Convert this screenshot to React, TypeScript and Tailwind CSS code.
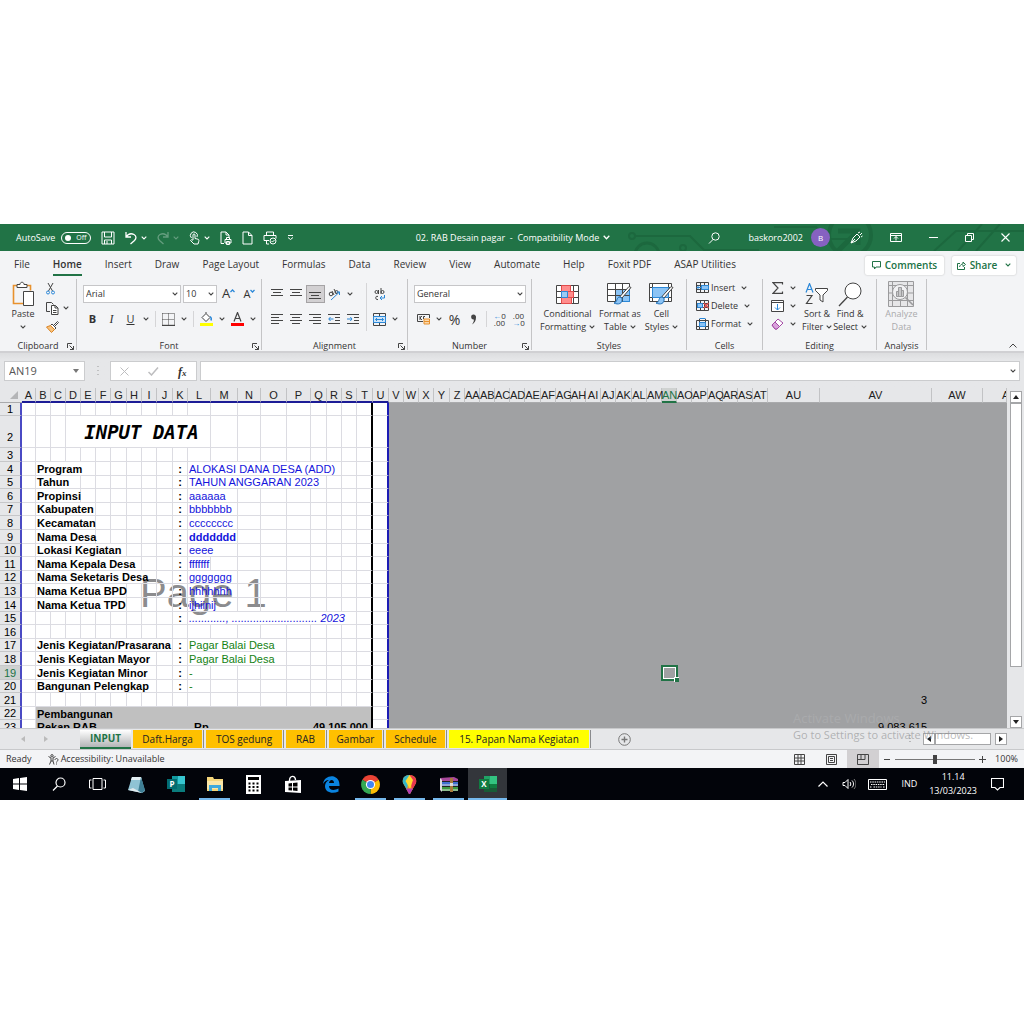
import type { ReactNode } from 'react';
import { clsx } from 'clsx';

const G = '#444444';
const B = '#2b88d8';

function Svg({ w, h, children, stroke = G }: { w: number; h: number; children: ReactNode; stroke?: string }) {
    return (
        <svg width={w} height={h} viewBox={`0 0 ${w} ${h}`} fill="none" stroke={stroke} strokeWidth="1" className="shrink-0">
            {children}
        </svg>
    );
}

function Chevron({ stroke = G }: { stroke?: string }) {
    return (
        <Svg w={6} h={4} stroke={stroke}>
            <path d="M.7.7 3 3 5.3.7" strokeWidth="1.1" />
        </Svg>
    );
}

function Lines({ widths, align = 'left' }: { widths: number[]; align?: 'left' | 'center' | 'right' }) {
    return (
        <Svg w={13} h={12}>
            {widths.map((w, i) => {
                const x = align === 'left' ? 0 : align === 'right' ? 12 - w : (12 - w) / 2;
                return <path key={i} d={`M${x} ${i * 3 + 1.5}h${w}`} />;
            })}
        </Svg>
    );
}

/* ---------- Title bar ---------- */

function TitleButton({ label, children, menu, faint }: { label: string; children: ReactNode; menu?: boolean; faint?: boolean }) {
    return (
        <button aria-label={label} className={clsx('flex items-center gap-1', faint && 'opacity-30')}>
            {children}
            {menu && <Chevron stroke="#fff" />}
        </button>
    );
}

function TitleBar() {
    return (
        <header className="relative flex h-[27px] items-center overflow-hidden bg-[#217346] text-[9px] text-white">
            <div className="absolute inset-y-0 right-0">
                <Svg w={400} h={27} stroke="#1c683e">
                    <circle cx="8" cy="12" r="3" strokeWidth="2" />
                    <path d="M12 12h54l14 14h55M150 3h42l12 12h26" strokeWidth="2" />
                    <circle cx="23" cy="31" r="12" strokeWidth="3" />
                    <circle cx="59" cy="24" r="3" strokeWidth="2" />
                    <circle cx="226" cy="11" r="21" strokeWidth="4" />
                    <path d="M214 7h20v14M234 7l-20 20" strokeWidth="5" />
                    <path d="M310 27l22-20h68M334 27l24-27M352 27l24-27" strokeWidth="2" />
                </Svg>
            </div>
            <div className="relative flex flex-1 items-center gap-[10px] pl-4">
                <label className="flex items-center gap-[6px]">
                    <span>AutoSave</span>
                    <span className="relative flex h-3 w-[30px] items-center rounded-full border border-white">
                        <input type="checkbox" className="absolute inset-0 appearance-none" />
                        <span className="ml-[3px] size-[6px] rounded-full bg-white" />
                        <span className="ml-[5px] text-[7px] leading-none">Off</span>
                    </span>
                </label>
                <TitleButton label="Save">
                    <Svg w={14} h={14} stroke="#fff">
                        <path d="M1 1h12v12H1zM3.5 1v5h7V1M3.5 13V9h7v4M6 10v3" />
                    </Svg>
                </TitleButton>
                <TitleButton label="Undo" menu>
                    <Svg w={12} h={14} stroke="#fff">
                        <path d="M1 1v5h5M1 6c2-3 5-4 8-2.5 2.500 1.500 2.500 4 .5 6L5.500 13" strokeWidth="1.3" />
                    </Svg>
                </TitleButton>
                <TitleButton label="Redo" menu faint>
                    <Svg w={12} h={14} stroke="#fff">
                        <path d="M11 1v5H6M11 6C9 3 6 2 3 3.5.5 5 .5 7.5 2.500 9.500L6.500 13" strokeWidth="1.3" />
                    </Svg>
                </TitleButton>
                <TitleButton label="Touch mode" menu>
                    <Svg w={11} h={14} stroke="#fff">
                        <path d="M2.500 7A3.500 3.500 0 1 1 8 6M4 9V4c0-1.500 2-1.500 2 0v3.500l3 .7c1 .3 1 1 .8 2L9 13H5L1.500 9.500c.5-1 1.500-1 2.500 0" />
                    </Svg>
                </TitleButton>
                <TitleButton label="Print preview">
                    <Svg w={12} h={14} stroke="#fff">
                        <path d="M4 12.500H1V1h5l3 3v3M6 1v3h3M5 8.500h6v3.500H5zM6.500 8.500v-2h3v2M6.500 10.500h3v3h-3z" />
                    </Svg>
                </TitleButton>
                <TitleButton label="New">
                    <Svg w={11} h={14} stroke="#fff">
                        <path d="M1 1h5.500l3.500 3.500V13H1zM6.500 1v3.500H10" />
                    </Svg>
                </TitleButton>
                <TitleButton label="Quick print">
                    <Svg w={14} h={14} stroke="#fff">
                        <path d="M6 9.500H1v-5h12v3M3.500 4.500V1h7v3.500M3.500 9v4H6" />
                        <circle cx="10" cy="10" r="3" />
                        <path d="m8.500 10 1 1 2-2" />
                    </Svg>
                </TitleButton>
                <TitleButton label="Customize toolbar">
                    <Svg w={7} h={7} stroke="#fff">
                        <path d="M1 1.500h5M1 3.500l2.500 2 2.500-2" />
                    </Svg>
                </TitleButton>
            </div>
            <button className="relative flex items-center gap-1 whitespace-pre">
                02. RAB Desain pagar  -  Compatibility Mode
                <Svg w={7} h={5} stroke="#fff">
                    <path d="m.7.7 2.800 3 2.800-3" strokeWidth="1.3" />
                </Svg>
            </button>
            <div className="relative flex flex-1 items-center justify-end pr-[14px]">
                <button aria-label="Search" className="mr-7">
                    <Svg w={12} h={12} stroke="#fff">
                        <circle cx="7.500" cy="4.500" r="3.700" />
                        <path d="M5 7.500 1 11.500" />
                    </Svg>
                </button>
                <button className="mr-5 flex items-center gap-2">
                    baskoro2002
                    <span className="flex size-[19px] items-center justify-center rounded-full bg-[#8661c1] text-[8px]">B</span>
                </button>
                <div className="flex items-center gap-[27px]">
                    <button aria-label="Drawing">
                        <Svg w={13} h={13} stroke="#fff">
                            <path d="m1 12 2-5 4-4 3 3-4 4-5 2 4-4M8 2l2-1M10 4l2-2M11 6l1.500-1" />
                        </Svg>
                    </button>
                    <button aria-label="Ribbon display options">
                        <Svg w={12} h={9} stroke="#fff">
                            <path d="M.5.5h11v8H.5zM.5 2.500h11M6 7.500v-4M4 5.500l2-2 2 2" />
                        </Svg>
                    </button>
                    <button aria-label="Minimize">
                        <Svg w={9} h={9} stroke="#fff">
                            <path d="M0 4.500h9" />
                        </Svg>
                    </button>
                    <button aria-label="Restore">
                        <Svg w={9} h={9} stroke="#fff">
                            <path d="M.5 2.500h6v6h-6zM2.500 2.500V.5h6v6h-2" />
                        </Svg>
                    </button>
                    <button aria-label="Close">
                        <Svg w={9} h={9} stroke="#fff">
                            <path d="m.5.5 8 8m0-8-8 8" strokeWidth="1.1" />
                        </Svg>
                    </button>
                </div>
            </div>
        </header>
    );
}

/* ---------- Ribbon ---------- */

const TABS = ['File', 'Home', 'Insert', 'Draw', 'Page Layout', 'Formulas', 'Data', 'Review', 'View', 'Automate', 'Help', 'Foxit PDF', 'ASAP Utilities'];

function RibbonTabs() {
    return (
        <nav className="flex h-7 items-center justify-between pr-2 pl-[14px]">
            <div className="flex gap-[23px] text-[10px] whitespace-nowrap">
                {TABS.map((tab) => (
                    <button
                        key={tab}
                        className={clsx('h-[21px] border-b-2', tab === 'Home' ? 'border-[#217346] font-semibold text-[#333]' : 'border-transparent')}
                    >
                        {tab}
                    </button>
                ))}
            </div>
            <div className="flex gap-2 text-[10px] font-semibold text-[#217346]">
                <button className="flex h-[19px] w-[79px] items-center justify-center gap-1 rounded-xs bg-white shadow-[0_0_2px_#bbb]">
                    <Svg w={9} h={9} stroke="#217346">
                        <path d="M.5.5h8v5.500H4L2.500 8V6h-2z" />
                    </Svg>
                    Comments
                </button>
                <button className="flex h-[19px] w-[64px] items-center justify-center gap-1 rounded-xs bg-white shadow-[0_0_2px_#bbb]">
                    <Svg w={9} h={9} stroke="#217346">
                        <path d="M3 2.500H.5v6h7V6M2.500 6C3 4 4.500 3 6 3V1l2.500 2.500L6 5.500V4" />
                    </Svg>
                    Share
                    <span className="pl-1"><Chevron stroke="#217346" /></span>
                </button>
            </div>
        </nav>
    );
}

function Group({ name, width, launcher, children }: { name: string; width: string; launcher?: boolean; children: ReactNode }) {
    return (
        <section className={clsx('relative flex h-[71px] shrink-0 flex-col justify-between border-r border-[#c4c4c6]', width)}>
            <div className="flex h-[58px]">{children}</div>
            <h2 className="flex h-2 items-center justify-center text-[9px]">{name}</h2>
            {launcher && (
                <button aria-label={`${name} settings`} className="absolute right-[2px] bottom-0">
                    <Svg w={7} h={7}>
                        <path d="M.5 5V.5H5M2.500 2.500l4 4M6.500 3v3.500H3" />
                    </Svg>
                </button>
            )}
        </section>
    );
}

function Tool({ label, children, menu, active }: { label: string; children: ReactNode; menu?: boolean; active?: boolean }) {
    return (
        <button aria-label={label} className="flex h-[18px] items-center">
            <span className={clsx('flex h-[18px] w-[19px] items-center justify-center', active && 'border border-[#a5a3a5] bg-[#d2d0d2]')}>{children}</span>
            {menu && <span className="flex w-3 justify-center"><Chevron /></span>}
        </button>
    );
}

function Rule() {
    return <span className="mx-[3px] h-4 w-px bg-[#d5d5d7]" />;
}

function Combo({ label, value, width }: { label: string; value: string; width: string }) {
    return (
        <label className={clsx('relative flex h-[18px] items-center border border-[#c6c6c8] bg-white', width)}>
            <select aria-label={label} className="h-full w-full appearance-none pl-[2px] text-[9px] text-[#333]">
                <option>{value}</option>
            </select>
            <span className="pointer-events-none absolute right-[2px]"><Chevron /></span>
        </label>
    );
}

function BigTool({ icon, lines, menu, faint }: { icon: ReactNode; lines: [string, string]; menu?: boolean; faint?: boolean }) {
    return (
        <button className={clsx('flex flex-col items-center pt-[2px] text-[9px] leading-[13px] whitespace-nowrap', faint && 'text-[#aaaaac]')}>
            <span className="flex h-[26px] items-center">{icon}</span>
            <span>{lines[0]}</span>
            <span className="flex items-center gap-[3px]">{lines[1]}{menu && <Chevron />}</span>
        </button>
    );
}

function SmallTool({ label, icon }: { label: string; icon: ReactNode }) {
    return (
        <button className="flex h-[18px] items-center gap-[2px] text-[9px]">
            {icon}
            {label}
            <span className="pl-1"><Chevron /></span>
        </button>
    );
}

function Ribbon() {
    return (
        <div className="flex h-[74px] overflow-hidden border-b-2 border-[#d0d0d3]">
            <Group name="Clipboard" width="w-[77px]" launcher>
                <button className="flex w-[46px] flex-col items-center pt-[2px] text-[9px] leading-[13px]">
                    <span className="flex h-[26px] items-center">
                        <Svg w={24} h={26}>
                            <path d="M6 4.500H2.500v18H12M16 4.500h3.500v5" stroke="#e8912d" strokeWidth="1.6" />
                            <path d="M6 6.500v-3h3c0-3 4-3 4 0h3v3z" fill="#fff" />
                            <path d="M12.500 10.500h10v14h-10z" fill="#fff" />
                        </Svg>
                    </span>
                    Paste
                    <span className="flex h-[13px] items-center"><Chevron /></span>
                </button>
                <div className="flex flex-col pt-[1px] pl-[-4px]">
                    <button aria-label="Cut" className="flex h-[18px] items-center">
                        <Svg w={9} h={12}>
                            <path d="m2 0 4.500 8M7 0 2.500 8" />
                            <circle cx="2" cy="9.500" r="1.500" stroke={B} />
                            <circle cx="7" cy="9.500" r="1.500" stroke={B} />
                        </Svg>
                    </button>
                    <button aria-label="Copy" className="flex h-5 items-center gap-1">
                        <Svg w={13} h={13}>
                            <path d="M4 9.500H.5v-9h5l2 2" />
                            <path d="M5.500 3.500h4l2.500 2.500v6.500H5.500zM9 3.500V6h3M7 8.500h3.500M7 10.500h3.500" fill="#fff" />
                        </Svg>
                        <Chevron />
                    </button>
                    <button aria-label="Format painter" className="flex h-[18px] items-center">
                        <Svg w={13} h={12}>
                            <path d="M8 4 11.500.5l1 1L9 5M6 3l4 4-1.500 1.500-4-4z" fill="#fff" />
                            <path d="M4.500 4.500.5 6l5 5.500 3-3z" fill="#f7c27d" stroke="#d98324" />
                        </Svg>
                    </button>
                </div>
            </Group>

            <Group name="Font" width="w-[185px]" launcher>
                <div className="flex flex-col gap-[7px] pt-[6px] pl-[6px]">
                    <div className="flex items-center gap-[2px]">
                        <Combo label="Font" value="Arial" width="w-[98px]" />
                        <Combo label="Font size" value="10" width="w-[34px]" />
                        <Tool label="Increase font size">
                            <span className="text-[13px]">A</span>
                            <Svg w={5} h={12} stroke={B}><path d="m.5 4 2-2 2 2" strokeWidth="1.3" /></Svg>
                        </Tool>
                        <Tool label="Decrease font size">
                            <span className="text-[11px]">A</span>
                            <Svg w={5} h={12} stroke={B}><path d="m.5 2 2 2 2-2" strokeWidth="1.3" /></Svg>
                        </Tool>
                    </div>
                    <div className="flex items-center">
                        <Tool label="Bold"><b className="text-[11px]">B</b></Tool>
                        <Tool label="Italic"><i className="font-['Liberation_Serif',serif] text-[12px]">I</i></Tool>
                        <Tool label="Underline" menu><u className="text-[11px]">U</u></Tool>
                        <Rule />
                        <Tool label="Borders" menu>
                            <Svg w={13} h={13}>
                                <path d="M.5.5h12v12M.5.5v12M6.500.5v12M.5 6.500h12" strokeDasharray="1 1" />
                                <path d="M0 12.500h13" strokeWidth="1.4" />
                            </Svg>
                        </Tool>
                        <Rule />
                        <Tool label="Fill color" menu>
                            <Svg w={13} h={14}>
                                <path d="m2 5.500 4-4 4 4-4 4zM6 1.500V0" fill="#fff" />
                                <path d="M10 4.500c1.500 1 1.500 2.500 1 4" stroke={B} strokeWidth="1.5" />
                                <path d="M0 12.500h13" stroke="#ff0" strokeWidth="3" />
                            </Svg>
                        </Tool>
                        <Tool label="Font color" menu>
                            <Svg w={13} h={14}>
                                <path d="M3 9.500 6.500.5 10 9.500M4.300 6.500h4.400" strokeWidth="1.2" />
                                <path d="M0 12.500h13" stroke="#f00" strokeWidth="3" />
                            </Svg>
                        </Tool>
                    </div>
                </div>
            </Group>

            <Group name="Alignment" width="w-[146px]" launcher>
                <div className="flex flex-col gap-[7px] pt-[6px] pl-[6px]">
                    <div className="flex w-[98px]">
                        <Tool label="Top align"><Lines widths={[12, 8, 12]} align="center" /></Tool>
                        <Tool label="Middle align"><Lines widths={[12, 8, 12]} align="center" /></Tool>
                        <Tool label="Bottom align" active><Lines widths={[0, 12, 8, 12]} align="center" /></Tool>
                        <Tool label="Orientation" menu>
                            <Svg w={13} h={13}>
                                <circle cx="3" cy="6" r="1.800" />
                                <path d="m4 3 2 4M6 1l2.500 5" />
                                <circle cx="8.500" cy="4" r="1.500" />
                                <path d="m3 12 8.500-8M8.500 4h3v3" stroke={B} />
                            </Svg>
                        </Tool>
                    </div>
                    <div className="flex w-[98px]">
                        <Tool label="Align left"><Lines widths={[12, 8, 12, 8]} /></Tool>
                        <Tool label="Center"><Lines widths={[12, 8, 12, 8]} align="center" /></Tool>
                        <Tool label="Align right"><Lines widths={[12, 8, 12, 8]} align="right" /></Tool>
                        <Tool label="Decrease indent">
                            <Svg w={13} h={12}>
                                <path d="M0 1.500h12M7 4.500h5M7 7.500h5M0 10.500h12" />
                                <path d="M5.500 6H.8M2.500 4 .8 6l1.700 2" stroke={B} />
                            </Svg>
                        </Tool>
                        <Tool label="Increase indent">
                            <Svg w={13} h={12}>
                                <path d="M0 1.500h12M7 4.500h5M7 7.500h5M0 10.500h12" />
                                <path d="M0 6h5M3.300 4 5 6 3.300 8" stroke={B} />
                            </Svg>
                        </Tool>
                    </div>
                </div>
                <span className="mt-[4px] h-12 w-px bg-[#d5d5d7]" />
                <div className="flex flex-col gap-[7px] pt-[6px] pl-[3px]">
                    <Tool label="Wrap text">
                        <Svg w={12} h={13}>
                            <circle cx="2.500" cy="4" r="1.500" />
                            <path d="M4.500 2v4M7 0v6M4 8.500c-3-1.500-3 4 0 3" />
                            <circle cx="8.500" cy="4" r="1.500" />
                            <path d="M10.500 7v3H6M8 8l-2 2 2 2" stroke={B} />
                        </Svg>
                    </Tool>
                    <Tool label="Merge and center" menu>
                        <Svg w={13} h={13}>
                            <path d="M.5.5h12v12H.5zM6.500.5v3M6.500 9.500v3" />
                            <path d="M.5 3.500h12v6H.5z" fill="#cfe5f8" stroke={B} />
                            <path d="M2.500 6.500h8M4 5 2.500 6.500 4 8M9 5l1.500 1.500L9 8" stroke={B} />
                        </Svg>
                    </Tool>
                </div>
            </Group>

            <Group name="Number" width="w-[124px]" launcher>
                <div className="flex flex-col gap-[7px] pt-[6px] pl-[6px]">
                    <Combo label="Number format" value="General" width="w-[112px]" />
                    <div className="flex items-center">
                        <Tool label="Accounting format" menu>
                            <Svg w={13} h={12}>
                                <path d="M12.500 5V1.500H.5v7H6M3 3v4M3 5l2-2M3 5l2 2M8 3.500H6.500V6" />
                                <path d="M7 6h5.500v5H7zM7 8.500h5.500" fill="#fbd9ae" stroke="#e8912d" />
                            </Svg>
                        </Tool>
                        <Tool label="Percent style"><span className="text-[14px]">%</span></Tool>
                        <Tool label="Comma style">
                            <Svg w={7} h={11}>
                                <path d="M3.500.5a2.500 2.500 0 0 1 2.500 3C6 7 4.500 9 2 10.500 3.500 8.500 4 7 3.800 5.500A2.500 2.500 0 1 1 3.500.5z" fill={G} stroke="none" />
                            </Svg>
                        </Tool>
                        <Rule />
                        <Tool label="Increase decimal">
                            <span className="text-[8px] leading-[7px]"><span className="text-[#2b88d8]">←</span>0<br />.00</span>
                        </Tool>
                        <Tool label="Decrease decimal">
                            <span className="text-[8px] leading-[7px]">.00<br /><span className="text-[#2b88d8]">→</span>0</span>
                        </Tool>
                    </div>
                </div>
            </Group>

            <Group name="Styles" width="w-[155px]">
                <div className="flex w-full justify-between px-2">
                    <BigTool
                        lines={['Conditional', 'Formatting']}
                        menu
                        icon={
                            <Svg w={23} h={19}>
                                <path d="M.5.5h22v18H.5zM.5 6.500h22M.5 12.500h22M5.500.5v18M17.500.5v18" fill="#fff" />
                                <path d="M5.500.5h9v6h-9zM11.500 6.500h6v6h-6zM5.500 12.500h10v6h-10z" fill="#ff8d8d" stroke="#e24b4b" />
                                <path d="M5.500 6.500h6v6h-6z" fill="#9ccbf4" stroke={B} />
                            </Svg>
                        }
                    />
                    <BigTool
                        lines={['Format as', 'Table']}
                        menu
                        icon={
                            <Svg w={25} h={22}>
                                <path d="M.5.5h22v18H.5z" fill="#fff" />
                                <path d="M8.500 6.500h14v12h-14z" fill="#8cc4f5" stroke={B} />
                                <path d="M.5 6.500h22M.5 12.500h22M8.500.5v18M15.500.5v18" />
                                <path d="M24 4.500 15 15l-2-1.500 9-10z" fill="#fff" />
                                <path d="M13 14c-4 0-2 5-6 6 4 2 9 1 8-5z" fill="#8cc4f5" stroke="#1d6fb8" />
                            </Svg>
                        }
                    />
                    <BigTool
                        lines={['Cell', 'Styles']}
                        menu
                        icon={
                            <Svg w={25} h={22}>
                                <path d="M.5.5h22v18H.5zM.5 4.500h22M.5 14.500h22M3.500.5v18M19.500.5v18" fill="#fff" />
                                <path d="M3.500 4.500h16v10h-16z" fill="#8cc4f5" stroke={B} />
                                <path d="M24 4.500 15 15l-2-1.500 9-10z" fill="#fff" />
                                <path d="M13 14c-4 0-2 5-6 6 4 2 9 1 8-5z" fill="#8cc4f5" stroke="#1d6fb8" />
                            </Svg>
                        }
                    />
                </div>
            </Group>

            <Group name="Cells" width="w-[76px]">
                <div className="flex flex-col pl-[9px]">
                    <SmallTool
                        label="Insert"
                        icon={
                            <Svg w={13} h={12}>
                                <path d="M.5.5h12v10H.5zM.5 3.500h12M.5 7.500h12M4.500.5v10M8.500.5v10" />
                                <path d="M5.500 3.500h7v4h-7z" fill="#8cc4f5" stroke={B} />
                                <path d="M6 5.500H1M3 3.500l-2 2 2 2" stroke={B} />
                            </Svg>
                        }
                    />
                    <SmallTool
                        label="Delete"
                        icon={
                            <Svg w={13} h={12}>
                                <path d="M.5.5h12v10H.5zM.5 3.500h12M.5 7.500h12M4.500.5v10M8.500.5v10" />
                                <path d="M1.500 3.500h5v4h-5z" fill="#8cc4f5" stroke={B} />
                                <path d="m8 3 4.500 5M12.500 3 8 8" stroke="#e24b4b" strokeWidth="1.3" />
                            </Svg>
                        }
                    />
                    <SmallTool
                        label="Format"
                        icon={
                            <Svg w={13} h={12}>
                                <path d="M.5 2.500h12v9H.5zM3.500 1v10.500M9.500 1v10.500M.5 8.500h12" />
                                <path d="M3.500 4.500h6v4h-6z" fill="#8cc4f5" stroke={B} />
                                <path d="M3.500.5h6" stroke={B} />
                            </Svg>
                        }
                    />
                </div>
            </Group>

            <Group name="Editing" width="w-[114px]">
                <div className="flex flex-col pl-[5px]">
                    <Tool label="AutoSum" menu>
                        <Svg w={12} h={12}><path d="M10.500 2.500V.7H1L6 6l-5 5.300h9.500V9.500" strokeWidth="1.2" /></Svg>
                    </Tool>
                    <Tool label="Fill" menu>
                        <Svg w={13} h={12}>
                            <path d="M.5.5h12v11H.5zM.5 2.500h12" fill="#fff" />
                            <path d="M6.500 4v6M4 7.500l2.500 2.500L9 7.500" stroke={B} />
                        </Svg>
                    </Tool>
                    <Tool label="Clear" menu>
                        <Svg w={13} h={12}>
                            <path d="m1 7 6-6 5 4-6 6H4z" fill="#fff" stroke="#a349a4" />
                            <path d="m1 7 3-3 4.500 4.500L6 11H4z" fill="#d9a3dc" stroke="#a349a4" />
                        </Svg>
                    </Tool>
                </div>
                <div className="flex flex-1 justify-between pr-[9px] pl-[3px]">
                    <BigTool
                        lines={['Sort &', 'Filter']}
                        menu
                        icon={
                            <Svg w={24} h={22}>
                                <path d="M1 9.500 4.500.5 8 9.500M2.300 6.500h4.400" stroke={B} strokeWidth="1.2" />
                                <path d="M1.500 12.500H7l-5.500 8h6" strokeWidth="1.2" />
                                <path d="M10.500 5.500h12v2L18 12v7l-3-2v-5l-4.500-4.500z" fill="#fff" />
                            </Svg>
                        }
                    />
                    <BigTool
                        lines={['Find &', 'Select']}
                        menu
                        icon={
                            <Svg w={25} h={25}>
                                <circle cx="15" cy="9" r="8" fill="#fff" />
                                <path d="m9.500 15-8.500 9" strokeWidth="1.3" />
                            </Svg>
                        }
                    />
                </div>
            </Group>

            <Group name="Analysis" width="w-[50px]">
                <div className="flex w-full justify-center">
                    <BigTool
                        lines={['Analyze', 'Data']}
                        faint
                        icon={
                            <Svg w={26} h={26} stroke="#9b9b9d">
                                <path d="M.5.5h25v25H.5zM.5 4.500h25M.5 19.500h25M4.500.5v25M12.500 19v6M19.500.5v25M.5 12h25" fill="#e6e6e8" />
                                <circle cx="12" cy="11" r="7.500" fill="#f1f1f3" />
                                <path d="m17.500 16.500 7.500 7.500" strokeWidth="1.6" />
                                <path d="M8.500 10.500h2v5h-2zM10.500 6.500h3v9h-3zM13.500 9.500h2v6h-2z" fill="#c8c8ca" />
                            </Svg>
                        }
                    />
                </div>
            </Group>
            <div className="flex flex-1 items-end justify-end pr-[7px] pb-[3px]">
                <button aria-label="Collapse ribbon">
                    <Svg w={8} h={5}><path d="m.5 4.500 3.500-3.500 3.500 3.500" /></Svg>
                </button>
            </div>
        </div>
    );
}

function FormulaBar() {
    return (
        <div className="flex h-[35px] items-start bg-linear-to-b from-[#dcdddf] via-[#e6e7e9] via-20% to-[#e6e7e9] pt-2 pr-1 pl-1">
            <div className="relative flex h-5 w-[81px] items-center border border-[#cbccce] bg-white">
                <input aria-label="Name box" defaultValue="AN19" className="w-full pl-1 text-[11px] text-[#555]" />
                <span className="absolute right-[5px]">
                    <Svg w={6} h={4}><path d="M0 0h6L3 4z" fill="#777" stroke="none" /></Svg>
                </span>
            </div>
            <div className="flex h-5 w-[25px] items-center justify-center">
                <Svg w={2} h={10}><path d="M1 0v10" stroke="#999" strokeDasharray="1 3" /></Svg>
            </div>
            <div className="flex h-5 w-[87px] items-center justify-around border border-[#cbccce] bg-white">
                <button aria-label="Cancel">
                    <Svg w={9} h={9} stroke="#bdbdbf"><path d="m.5.5 8 8m0-8-8 8" /></Svg>
                </button>
                <button aria-label="Enter">
                    <Svg w={11} h={9} stroke="#bdbdbf"><path d="m.5 5 3 3L10 .5" strokeWidth="1.5" /></Svg>
                </button>
                <button className="font-['Liberation_Serif',serif] leading-none font-bold italic">
                    <span className="text-[12px]">f</span>
                    <span className="text-[9px]">x</span>
                </button>
            </div>
            <div className="relative ml-[3px] flex h-5 flex-1 items-center border border-[#cbccce] bg-white">
                <input aria-label="Formula" className="w-full" />
                <span className="absolute right-[3px]"><Chevron /></span>
            </div>
        </div>
    );
}

/* ---------- Worksheet ---------- */

const NARROW = [15, 15, 15, 16, 15, 15, 15, 15, 15, 16, 15, 15, 15, 15, 15, 16, 15, 15, 15, 15, 16, 15, 15, 15, 15];
const WIDTHS = [14, 15, 15, 15, 15, 15, 16, 15, 15, 16, 15, 23, 27, 23, 26, 24, 16, 15, 15, 16, 16, ...NARROW, 52, 112, 51];
const LETTERS = 'ABCDEFGHIJKLMNOPQRSTUVWXYZ'.split('');
const COLUMNS = [...LETTERS, ...LETTERS.slice(0, 24).map((l) => 'A' + l)];

interface Entry {
    n: number;
    h: number;
    label?: string;
    span?: number;
    value?: string;
    valueSpan?: number;
    tone?: string;
}

const BLUE = 'text-[#1414dc]';
const GREEN = 'text-[#148214]';

const ENTRIES: Entry[] = [
    { n: 1, h: 13 },
    { n: 2, h: 32 },
    { n: 3, h: 14 },
    { n: 4, h: 14, label: 'Program', span: 4, value: 'ALOKASI DANA DESA (ADD)', valueSpan: 7, tone: BLUE },
    { n: 5, h: 13, label: 'Tahun', span: 3, value: 'TAHUN ANGGARAN 2023', valueSpan: 6, tone: BLUE },
    { n: 6, h: 14, label: 'Propinsi', span: 3, value: 'aaaaaa', valueSpan: 2, tone: BLUE },
    { n: 7, h: 13, label: 'Kabupaten', span: 4, value: 'bbbbbbb', valueSpan: 2, tone: BLUE },
    { n: 8, h: 14, label: 'Kecamatan', span: 4, value: 'cccccccc', valueSpan: 2, tone: BLUE },
    { n: 9, h: 14, label: 'Nama Desa', span: 4, value: 'ddddddd', valueSpan: 2, tone: 'font-bold text-[#1414dc]' },
    { n: 10, h: 13, label: 'Lokasi Kegiatan', span: 6, value: 'eeee', valueSpan: 2, tone: BLUE },
    { n: 11, h: 14, label: 'Nama Kepala Desa', span: 7, value: 'fffffff', valueSpan: 1, tone: BLUE },
    { n: 12, h: 13, label: 'Nama Seketaris Desa', span: 8, value: 'ggggggg', valueSpan: 2, tone: BLUE },
    { n: 13, h: 14, label: 'Nama Ketua BPD', span: 6, value: 'hhhhhhh', valueSpan: 2, tone: BLUE },
    { n: 14, h: 14, label: 'Nama Ketua TPD', span: 6, value: 'ijhiinij', valueSpan: 2, tone: BLUE },
    { n: 15, h: 13, value: '............, ............................ 2023', valueSpan: 8, tone: 'italic text-[#1414dc]' },
    { n: 16, h: 14 },
    { n: 17, h: 13, label: 'Jenis Kegiatan/Prasarana', span: 9, value: 'Pagar Balai Desa', valueSpan: 4, tone: GREEN },
    { n: 18, h: 14, label: 'Jenis Kegiatan Mayor', span: 8, value: 'Pagar Balai Desa', valueSpan: 4, tone: GREEN },
    { n: 19, h: 14, label: 'Jenis Kegiatan Minor', span: 8, value: '-', valueSpan: 1, tone: GREEN },
    { n: 20, h: 13, label: 'Bangunan Pelengkap', span: 8, value: '-', valueSpan: 1, tone: GREEN },
    { n: 21, h: 14 },
    { n: 22, h: 13 },
    { n: 23, h: 14 },
];

function Blank({ from, to }: { from: number; to: number }) {
    return (
        <>
            {Array.from({ length: Math.max(0, to - from) }, (_, i) => (
                <td
                    key={i}
                    className={clsx(
                        'border-b border-b-[#dcdce2]',
                        from + i === 19 ? 'border-r-2 border-r-black' : from + i === 20 ? 'border-r-2 border-r-[#1c1cb4]' : 'border-r border-r-[#dcdce2]'
                    )}
                />
            ))}
        </>
    );
}

const CELL = 'border-r border-b border-[#dcdce2] px-[1px]';
const OUTSIDE = 'bg-[#a0a1a3]';

function PageCells({ row }: { row: Entry }) {
    if (row.n === 2) {
        return (
            <>
                <Blank from={0} to={3} />
                <td colSpan={9} className={clsx(CELL, "pl-2 text-center font-['DejaVu_Sans_Mono',monospace] text-[19px] leading-[20px] font-bold italic")}>INPUT DATA</td>
                <Blank from={12} to={21} />
            </>
        );
    }
    if (row.n === 22) {
        return (
            <>
                <Blank from={0} to={1} />
                <td colSpan={19} className="border-r-2 border-black bg-[#c0c0c0] px-[1px] font-bold">Pembangunan</td>
                <Blank from={20} to={21} />
            </>
        );
    }
    if (row.n === 23) {
        return (
            <>
                <Blank from={0} to={1} />
                <td colSpan={10} className="bg-[#c0c0c0] px-[1px] font-bold">Rekap RAB</td>
                <td className="bg-[#c0c0c0] pl-[6px] font-bold">Rp</td>
                <td colSpan={8} className="border-r-2 border-black bg-[#c0c0c0] pr-[3px] text-right font-bold">49.105.000</td>
                <Blank from={20} to={21} />
            </>
        );
    }
    if (!row.value) return <Blank from={0} to={21} />;
    const span = row.span ?? 0;
    const valueSpan = row.valueSpan ?? 1;
    return (
        <>
            <Blank from={0} to={1} />
            {row.label && <th scope="row" colSpan={span} className={clsx(CELL, 'text-left font-bold')}>{row.label}</th>}
            <Blank from={1 + span} to={10} />
            <td className={clsx(CELL, 'text-center font-bold')}>:</td>
            <td colSpan={valueSpan} className={clsx(CELL, row.tone)}>{row.value}</td>
            <Blank from={11 + valueSpan} to={21} />
        </>
    );
}

function OutsideCells({ n }: { n: number }) {
    if (n === 19) {
        return (
            <>
                <td colSpan={18} className={OUTSIDE} />
                <td className={clsx(OUTSIDE, 'relative')}>
                    <span className="absolute -inset-px border-2 border-[#217346]">
                        <span className="absolute inset-0 border border-white" />
                        <span className="absolute -right-[3px] -bottom-[3px] size-[5px] border-t border-l border-white bg-[#217346]" />
                    </span>
                </td>
                <td colSpan={10} className={OUTSIDE} />
            </>
        );
    }
    if (n === 21 || n === 23) {
        return (
            <>
                <td colSpan={26} className={OUTSIDE} />
                <td className={clsx(OUTSIDE, 'pr-[5px] text-right')}>{n === 21 ? '3' : '9.083.615'}</td>
                <td colSpan={2} className={OUTSIDE} />
            </>
        );
    }
    return <td colSpan={29} className={OUTSIDE} />;
}

function Worksheet() {
    return (
        <div className="flex h-[340px] bg-[#e6e7e9]">
            <div className="relative isolate min-w-0 flex-1 overflow-hidden bg-white font-['Liberation_Sans',Arial,sans-serif]">
                <div className="absolute top-[182px] left-[140px] -z-10 text-[40px] leading-[46px] text-[#8c8c8e]">Page 1</div>
                <table className="w-full table-fixed border-separate border-spacing-0 text-[11px] leading-[12px] whitespace-nowrap text-black">
                    <colgroup>
                        <col style={{ width: 22 }} />
                        {COLUMNS.map((c, i) => <col key={c} style={{ width: WIDTHS[i] }} />)}
                    </colgroup>
                    <thead>
                        <tr className="h-[15px] bg-[#e6e7e9] text-[#222]">
                            <th className="border-b border-[#a9aaac] p-0">
                                <span className="flex justify-end pr-1"><Svg w={8} h={8}><path d="M8 0v8H0z" fill="#b4b5b7" stroke="none" /></Svg></span>
                            </th>
                            {COLUMNS.map((c, i) => (
                                <th
                                    key={c}
                                    scope="col"
                                    className={clsx(
                                        'border-r border-r-[#c2c3c5] p-0 font-normal',
                                        c === 'AX' ? 'overflow-hidden pl-[19px] text-left' : 'text-center',
                                        i < 21 ? 'border-b-2 border-b-[#1c1c96]' : c === 'AN' ? 'border-b-2 border-b-[#217346] bg-[#cfd2d1] text-[#217346]' : 'border-b border-b-[#a9aaac]'
                                    )}
                                >
                                    {c}
                                </th>
                            ))}
                        </tr>
                    </thead>
                    <tbody>
                        {ENTRIES.map((row) => (
                            <tr key={row.n} style={{ height: row.h }}>
                                <th
                                    scope="row"
                                    className={clsx(
                                        'border-r-2 border-b border-r-[#4a4ac4] border-b-[#c6c7c9] p-0 text-center font-normal',
                                        row.n === 19 ? 'bg-[#cfd2d1] text-[#217346]' : 'bg-[#e6e7e9]',
                                        row.n === 2 && 'align-bottom leading-[20px]'
                                    )}
                                >
                                    {row.n}
                                </th>
                                <PageCells row={row} />
                                <OutsideCells n={row.n} />
                            </tr>
                        ))}
                    </tbody>
                </table>
            </div>
            <div className="flex w-[17px] flex-col items-center pt-[3px]">
                <button aria-label="Scroll up" className="flex h-3 w-3 items-center justify-center border border-[#a5a6a8] bg-white">
                    <Svg w={6} h={4}><path d="M0 4h6L3 0z" fill="#222" stroke="none" /></Svg>
                </button>
                <div className="h-[264px] w-3 border border-[#a5a6a8] bg-white" />
                <div className="flex-1" />
                <button aria-label="Scroll down" className="flex h-3 w-3 items-center justify-center border border-[#a5a6a8] bg-white">
                    <Svg w={6} h={4}><path d="M0 0h6L3 4z" fill="#222" stroke="none" /></Svg>
                </button>
            </div>
        </div>
    );
}

const SHEETS = [
    { name: 'Daft.Harga', width: 'w-[69px]', color: 'bg-[#ffc000]' },
    { name: 'TOS gedung', width: 'w-[76px]', color: 'bg-[#ffc000]' },
    { name: 'RAB', width: 'w-[39px]', color: 'bg-[#ffc000]' },
    { name: 'Gambar', width: 'w-[53px]', color: 'bg-[#ffc000]' },
    { name: 'Schedule', width: 'w-[59px]', color: 'bg-[#ffc000]' },
    { name: '15. Papan Nama Kegiatan', width: 'w-[140px]', color: 'bg-[#ffff00]' },
];

function SheetTabs() {
    return (
        <div className="flex h-[22px] items-center border-t border-b border-[#c8c9cb] bg-[#e6e7e9] text-[10px] text-[#222]">
            <div className="flex w-20 items-center justify-center gap-[19px] pr-3">
                <button aria-label="Previous sheet"><Svg w={4} h={6}><path d="M4 0v6L0 3z" fill="#bbb" stroke="none" /></Svg></button>
                <button aria-label="Next sheet"><Svg w={4} h={6}><path d="M0 0v6l4-3z" fill="#bbb" stroke="none" /></Svg></button>
            </div>
            <button className="h-[19px] w-[51px] border-b-2 border-[#217346] bg-linear-to-b from-white to-[#b4b5b7] leading-[17px] font-bold text-[#217346]">INPUT</button>
            {SHEETS.map((sheet) => (
                <div key={sheet.name} className="flex">
                    <button className={clsx('ml-[2px] h-[18px] leading-[18px] whitespace-nowrap', sheet.width, sheet.color)}>{sheet.name}</button>
                    <span className="ml-[1px] h-[18px] w-px bg-[#8a8b8d]" />
                </div>
            ))}
            <button aria-label="New sheet" className="ml-[27px]">
                <Svg w={13} h={13} stroke="#777">
                    <circle cx="6.500" cy="6.500" r="5.800" />
                    <path d="M6.500 3.500v6M3.500 6.500h6" strokeWidth="1.4" />
                </Svg>
            </button>
            <div className="flex flex-1 items-center justify-end pr-[17px]">
                <span className="mr-3"><Svg w={2} h={8}><path d="M1 0v8" stroke="#888" strokeDasharray="1 2" /></Svg></span>
                <button aria-label="Scroll left" className="flex h-3 w-3 items-center justify-center border border-[#a5a6a8] bg-white">
                    <Svg w={4} h={6}><path d="M4 0v6L0 3z" fill="#222" stroke="none" /></Svg>
                </button>
                <div className="mr-1 h-3 w-14 border border-[#a5a6a8] bg-white" />
                <button aria-label="Scroll right" className="flex h-3 w-3 items-center justify-center border border-[#a5a6a8] bg-white">
                    <Svg w={4} h={6}><path d="M0 0v6l4-3z" fill="#222" stroke="none" /></Svg>
                </button>
            </div>
        </div>
    );
}

function StatusBar() {
    return (
        <footer className="flex h-[18px] items-center justify-between bg-[#f3f4f6] px-[6px] text-[9px]">
            <div className="flex items-center gap-4">
                <span>Ready</span>
                <button className="flex items-center gap-[2px]">
                    <Svg w={11} h={11}>
                        <circle cx="4" cy="1.800" r="1.200" />
                        <path d="M.5 2.500 3 4v3L1.500 10.500M7.500 2.500 5 4v3M3 7h2l1 3.500M7 6c0-2 3-2 3 0 0 1.300-1.500 1-1.500 2.500M8.500 9.500v1" />
                    </Svg>
                    Accessibility: Unavailable
                </button>
            </div>
            <div className="flex h-full items-center">
                <button aria-label="Normal view" className="flex h-full w-8 items-center justify-center">
                    <Svg w={11} h={11}><path d="M.5.5h10v10H.5zM4 .5v10M7 .5v10M.5 4h10M.5 7h10" /></Svg>
                </button>
                <button aria-label="Page layout view" className="flex h-full w-8 items-center justify-center">
                    <Svg w={11} h={11}><path d="M.5.5h10v10H.5zM2.500 2.500h6v6h-6zM4 4.500h3M4 6.500h3" /></Svg>
                </button>
                <button aria-label="Page break preview" className="flex h-full w-8 items-center justify-center bg-[#d2d0d2]">
                    <Svg w={12} h={11}><path d="M.5.5h11v10H.5zM4 .5v5h4v-5M.5 5.500H4" /></Svg>
                </button>
                <button aria-label="Zoom out" className="px-[5px]"><Svg w={6} h={7}><path d="M0 3.500h6" /></Svg></button>
                <span className="relative flex h-full w-20 items-center justify-center">
                    <input type="range" aria-label="Zoom" className="absolute inset-0 w-full appearance-none opacity-0" />
                    <span className="h-px w-full bg-[#777]" />
                    <span className="absolute h-[9px] w-1 bg-[#444]" />
                </span>
                <button aria-label="Zoom in" className="px-1"><Svg w={7} h={7}><path d="M0 3.500h7M3.500 0v7" /></Svg></button>
                <span className="w-7 text-right">100%</span>
            </div>
        </footer>
    );
}

/* ---------- Windows taskbar ---------- */

const APPS: { name: string; open?: boolean; active?: boolean; icon: ReactNode }[] = [
    {
        name: 'Start',
        icon: <Svg w={14} h={14} stroke="none"><path d="M0 2l6-1v5.500H0zM7 .9 14 0v6.500H7zM0 7.500h6V13l-6-1zM7 7.500h7V14l-7-.9z" fill="#fff" /></Svg>,
    },
    {
        name: 'Search',
        icon: <Svg w={14} h={14} stroke="#fff"><circle cx="8.500" cy="5.500" r="4.500" strokeWidth="1.2" /><path d="M5.500 9 1 13.500" strokeWidth="1.2" /></Svg>,
    },
    {
        name: 'Task view',
        icon: <Svg w={17} h={12} stroke="#fff"><path d="M4 .5h9v11H4zM2.500 2H.5v8h2M14.500 2h2v8h-2" /></Svg>,
    },
    {
        name: 'Notepad',
        icon: (
            <Svg w={19} h={17} stroke="none">
                <path d="M5 1h9l4 14-3 2L1 14z" fill="#8fc3d4" />
                <path d="M5 1h9l1 3H4z" fill="#e3eff3" />
                <path d="M14 1l4 13-3 3-4-1z" fill="#3f7f95" />
                <path d="m1 14 14 3-9-5z" fill="#dfe9ec" />
            </Svg>
        ),
    },
    {
        name: 'Publisher',
        icon: (
            <Svg w={20} h={18} stroke="none">
                <path d="M6 1h13v16H6z" fill="#0a7c7c" />
                <path d="M12 1h7v8h-7z" fill="#37c6d0" />
                <path d="M6 1h6v8H6z" fill="#119a9f" />
                <path d="M1 4h10v10H1z" fill="#036c70" />
                <text x="3.500" y="12" fontSize="8" fontWeight="700" fill="#fff">P</text>
            </Svg>
        ),
    },
    {
        name: 'File Explorer',
        open: true,
        icon: (
            <Svg w={18} h={16} stroke="none">
                <path d="M1 1h6l1 2h9v12H1z" fill="#f5d67b" />
                <path d="M1 5h16v8H1z" fill="#fbe7a8" />
                <path d="M3 15V9h12v6h-3v-3H6v3z" fill="#3fa9dc" />
            </Svg>
        ),
    },
    {
        name: 'Calculator',
        icon: (
            <Svg w={15} h={19} stroke="none">
                <path d="M0 0h15v19H0z" fill="#fff" />
                <path d="M2 2h11v3H2z" fill="#000" />
                <path d="M2.500 8.500h10M2.500 12h10M2.500 15.500h10" stroke="#000" strokeWidth="2" strokeDasharray="2 2" />
            </Svg>
        ),
    },
    {
        name: 'Store',
        icon: (
            <Svg w={18} h={19} stroke="none">
                <path d="m1 6 16-1v13l-16-1z" fill="#fff" />
                <path d="M5.500 6c0-6 6-6 6-1" stroke="#fff" strokeWidth="1.4" />
                <path d="M4.500 8.500 8 8v3.500H4.500zM9 8l4.500-.5v4H9zM4.500 12.500H8v3l-3.500-.3zM9 12.500h4.500V16L9 15.500z" fill="#000" />
            </Svg>
        ),
    },
    {
        name: 'Edge',
        icon: (
            <Svg w={17} h={17} stroke="none">
                <path d="M0 8C1-2 16-3 16.500 8.500v1.500H6c0 5 6 4.500 9.500 2.500v3C10 18 2 17 2 10c0-3 2-5 4-6C3 4 1 6 0 8zM6 7h5c0-4-4.500-4-5 0z" fill="#0a84e0" />
            </Svg>
        ),
    },
    {
        name: 'Chrome',
        open: true,
        icon: (
            <Svg w={19} h={19} stroke="none">
                <path d="M9.500 9.500 1.300 4.800A9.500 9.500 0 0 1 17.700 4.800z" fill="#ea4335" />
                <path d="M9.500 9.500 17.700 4.800A9.500 9.500 0 0 1 9.500 19z" fill="#fbbc05" />
                <path d="M9.500 9.500V19A9.500 9.500 0 0 1 1.300 4.800z" fill="#34a853" />
                <circle cx="9.500" cy="9.500" r="4.600" fill="#fff" />
                <circle cx="9.500" cy="9.500" r="3.500" fill="#4285f4" />
            </Svg>
        ),
    },
    {
        name: 'CorelDRAW',
        open: true,
        icon: (
            <Svg w={15} h={19} stroke="none">
                <path d="M7.500 0C2 0 0 4 1 8l6 11h1l6-11c1-4-1-8-6.500-8z" fill="#f59a23" />
                <path d="M7.500 0C2 0 0 4 1 8l4 6.500z" fill="#35b6c9" />
                <path d="M7.500 0C12 0 15 4 14 8l-4 7z" fill="#e8364f" />
                <path d="M7.500 0 11 5 8 14 3.500 6z" fill="#ffd92e" />
                <path d="m4 13.500 7 0-3 5.500H7z" fill="#b03fb5" />
            </Svg>
        ),
    },
    {
        name: 'WinRAR',
        open: true,
        icon: (
            <Svg w={20} h={17} stroke="none">
                <path d="M1 2 15 1l4 2v3H3z" fill="#a8479a" />
                <path d="M3 6h16v4H3z" fill="#3f6fd0" />
                <path d="M3 11h16v4H3z" fill="#3c9a3f" />
                <path d="M3 9h16M3 14h16" stroke="#ddd" />
                <path d="M1 2l2 2v12l-2-2z" fill="#ddd" />
                <path d="M3 5.500h16M3 10.500h16" stroke="#222" />
                <path d="M11 2h3v14h-3z" fill="#a87a3c" />
                <path d="M11 7h3v3h-3z" fill="#ddd" />
            </Svg>
        ),
    },
    {
        name: 'Excel',
        open: true,
        active: true,
        icon: (
            <Svg w={20} h={18} stroke="none">
                <path d="M6 1h13v16H6z" fill="#185c37" />
                <path d="M12 1h7v8h-7z" fill="#33c481" />
                <path d="M6 1h6v8H6z" fill="#21a366" />
                <path d="M12 9h7v4h-7z" fill="#107c41" />
                <path d="M1 4h10v10H1z" fill="#107c41" />
                <text x="3.200" y="12" fontSize="8" fontWeight="700" fill="#fff">X</text>
            </Svg>
        ),
    },
];

function Taskbar() {
    return (
        <div className="flex h-8 items-center justify-between bg-[#02040a] pr-5 text-[9px] text-white">
            <div className="flex h-full">
                {APPS.map((app) => (
                    <button
                        key={app.name}
                        aria-label={app.name}
                        className={clsx('relative flex w-[39px] items-center justify-center', app.active && 'bg-[#33363b]')}
                    >
                        {app.icon}
                        {app.open && <span className={clsx('absolute bottom-0 h-[2px] bg-[#76b9ed]', app.active ? 'inset-x-0' : 'inset-x-1')} />}
                    </button>
                ))}
            </div>
            <div className="flex items-center">
                <button aria-label="Show hidden icons" className="mr-[14px]"><Svg w={10} h={6} stroke="#fff"><path d="m.5 5.500 4.500-4.500 4.500 4.500" strokeWidth="1.2" /></Svg></button>
                <button aria-label="Volume" className="mr-3">
                    <Svg w={14} h={12} stroke="#fff"><path d="M1 4.500h2L6 1.500v9L3 7.500H1zM8 4c1 1.300 1 2.700 0 4M10 2.500c2 2 2 5 0 7" /><path d="M12 1c2.500 3 2.500 7 0 10" stroke="#777" /></Svg>
                </button>
                <button aria-label="Keyboard" className="mr-[14px]">
                    <Svg w={19} h={11} stroke="#fff"><path d="M.5.5h18v10H.5z" /><path d="M2 3h15M3 5.500h14M2 8h2M5.500 8h8M15 8h2" strokeDasharray="1.500 .8" /></Svg>
                </button>
                <button className="mr-3">IND</button>
                <button className="mr-[14px] text-center leading-[14px]">11.14<br />13/03/2023</button>
                <button aria-label="Notifications">
                    <Svg w={13} h={13} stroke="#fff"><path d="M.5.5h12v9H9L6.500 12 4 9.500H.5z" strokeWidth="1.1" /></Svg>
                </button>
            </div>
        </div>
    );
}

export default function App() {
    return (
        <div className="min-h-screen bg-white py-56 font-['Open_Sans','Noto_Sans',sans-serif] text-[#333]">
            <main className="relative bg-[#f3f4f6]">
                <TitleBar />
                <RibbonTabs />
                <Ribbon />
                <FormulaBar />
                <Worksheet />
                <SheetTabs />
                <StatusBar />
                <Taskbar />
                <div className="pointer-events-none absolute right-[42px] bottom-[57px] w-[189px] whitespace-nowrap text-[#8a8b8d]/60">
                    <p className="text-[13px] leading-[18px] text-[#b0b1b3]/60">Activate Windows</p>
                    <p className="text-[11px] leading-[16px]">Go to Settings to activate Windows.</p>
                </div>
            </main>
        </div>
    );
}
